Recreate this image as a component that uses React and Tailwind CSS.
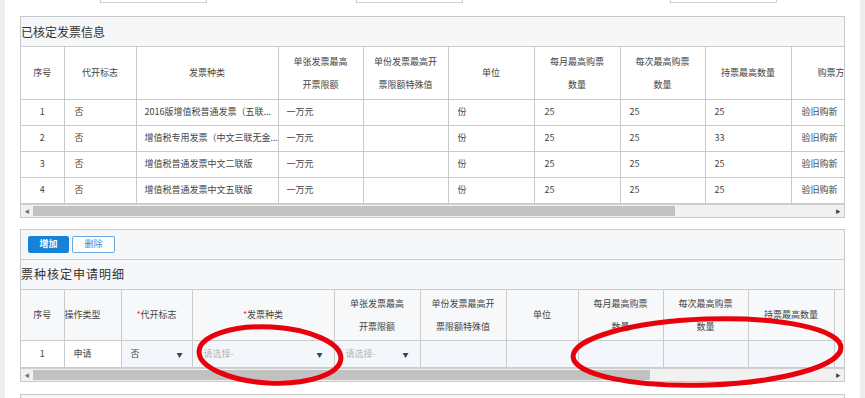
import React from "react";

const font = { fontFamily: '"Noto Sans CJK SC", "Noto Sans", sans-serif' };

const approved = [
  { no: 1, kind: "2016版增值税普通发票（五联...", qty: "25" },
  { no: 2, kind: "增值税专用发票（中文三联无金...", qty: "33" },
  { no: 3, kind: "增值税普通发票中文二联版", qty: "25" },
  { no: 4, kind: "增值税普通发票中文五联版", qty: "25" },
];

function Caret() {
  return <span className="text-[6px] text-gray-700">▼</span>;
}

function FakeScroll({ thumb }) {
  return (
    <div className="flex h-[13px] items-center border-t border-[#d0d0d0] bg-[#f1f1f1]">
      <div className="flex w-[12px] justify-center text-[5px] text-gray-500">◀</div>
      <div className={`h-[10px] bg-[#c1c1c1] ${thumb}`}></div>
      <div className="flex-1"></div>
      <div className="flex w-[12px] justify-center text-[5px] text-gray-700">▶</div>
    </div>
  );
}

function Head({ children, className = "" }) {
  return (
    <th className={`border-r border-b border-[#cbcbcb] px-1 text-center align-middle text-[9px] font-normal leading-[23px] text-[#444] ${className}`}>
      {children}
    </th>
  );
}

function Cell({ children, className = "" }) {
  return (
    <td className={`overflow-hidden whitespace-nowrap border-r border-b border-[#cbcbcb] text-[9px] text-[#444] ${className}`}>
      {children}
    </td>
  );
}

function Req({ children }) {
  return (
    <>
      <span className="text-red-500">*</span>
      {children}
    </>
  );
}

export default function App() {
  return (
    <div className="relative flex h-[398px] w-[865px] overflow-hidden bg-white" style={font}>
      <div className="w-[5px] shrink-0 bg-[#eeeeee]"></div>
      <div className="min-w-0 flex-1 px-[15px]">
        <div className="relative h-[3px]">
          <div className="absolute left-[80px] top-0 h-[3px] w-[107px] border-x border-b border-[#cfcfcf]"></div>
          <div className="absolute left-[336px] top-0 h-[3px] w-[107px] border-x border-b border-[#cfcfcf]"></div>
          <div className="absolute left-[650px] top-0 h-[3px] w-[107px] border-x border-b border-[#cfcfcf]"></div>
        </div>

        <div className="mt-[13px] border border-[#c8c8c8]">
          <div className="flex h-[30px] items-center border-b border-[#cbcbcb] bg-[#f6f7f9] text-[12px] text-[#333]">
            已核定发票信息
          </div>
          <div className="overflow-hidden">
            <table className="w-[880px] table-fixed border-collapse">
              <colgroup>
                <col className="w-[43px]" />
                <col className="w-[72px]" />
                <col className="w-[142px]" />
                <col className="w-[85px]" />
                <col className="w-[85px]" />
                <col className="w-[86px]" />
                <col className="w-[86px]" />
                <col className="w-[85px]" />
                <col className="w-[86px]" />
                <col className="w-[110px]" />
              </colgroup>
              <thead>
                <tr className="h-[52px] bg-white">
                  <Head>序号</Head>
                  <Head>代开标志</Head>
                  <Head>发票种类</Head>
                  <Head>单张发票最高<br />开票限额</Head>
                  <Head>单份发票最高开<br />票限额特殊值</Head>
                  <Head>单位</Head>
                  <Head>每月最高购票<br />数量</Head>
                  <Head>每次最高购票<br />数量</Head>
                  <Head>持票最高数量</Head>
                  <Head className="text-left pl-[26px]">购票方式</Head>
                </tr>
              </thead>
              <tbody>
                {approved.map((r) => (
                  <tr key={r.no} className="h-[26px]">
                    <Cell className="text-center">{r.no}</Cell>
                    <Cell className="pl-[10px]">否</Cell>
                    <Cell className="pl-[8px]">{r.kind}</Cell>
                    <Cell className="pl-[8px]">一万元</Cell>
                    <Cell></Cell>
                    <Cell className="pl-[9px]">份</Cell>
                    <Cell className="pl-[10px]">25</Cell>
                    <Cell className="pl-[9px]">25</Cell>
                    <Cell className="pl-[9px]">{r.qty}</Cell>
                    <Cell className="pl-[10px]">验旧购新</Cell>
                  </tr>
                ))}
              </tbody>
            </table>
          </div>
          <FakeScroll thumb="w-[642px]" />
        </div>

        <div className="mt-[11px] border border-[#c8c8c8]">
          <div className="flex h-[30px] items-center gap-[3px] border-b border-[#cbcbcb] bg-[#f6f7f9] pl-[7px]">
            <button className="h-[17px] w-[41px] rounded-[2px] bg-[#1683d8] text-[9px] font-bold text-white">增加</button>
            <button className="h-[17px] w-[43px] rounded-[2px] border border-[#6aa9dd] bg-white text-[9px] text-[#3a8ad0]">删除</button>
          </div>
          <div className="flex h-[30px] items-center border-b border-[#cbcbcb] bg-[#f6f7f9] text-[12px] tracking-[1px] text-[#333]">
            票种核定申请明细
          </div>
          <div className="overflow-hidden">
            <table className="w-[920px] table-fixed border-collapse">
              <colgroup>
                <col className="w-[43px]" />
                <col className="w-[57px]" />
                <col className="w-[71px]" />
                <col className="w-[142px]" />
                <col className="w-[86px]" />
                <col className="w-[86px]" />
                <col className="w-[72px]" />
                <col className="w-[85px]" />
                <col className="w-[85px]" />
                <col className="w-[86px]" />
                <col className="w-[107px]" />
              </colgroup>
              <thead>
                <tr className="h-[51px] bg-[#f7f8fa]">
                  <Head>序号</Head>
                  <Head className="text-left !px-0">操作类型</Head>
                  <Head><Req>代开标志</Req></Head>
                  <Head><Req>发票种类</Req></Head>
                  <Head>单张发票最高<br />开票限额</Head>
                  <Head>单份发票最高开<br />票限额特殊值</Head>
                  <Head>单位</Head>
                  <Head>每月最高购票<br />数量</Head>
                  <Head>每次最高购票<br />数量</Head>
                  <Head>持票最高数量</Head>
                  <Head></Head>
                </tr>
              </thead>
              <tbody>
                <tr className="h-[27px]">
                  <Cell className="text-center">1</Cell>
                  <Cell className="pl-[9px]">申请</Cell>
                  <Cell className="bg-[#f3f6fb] px-[9px]">
                    <div className="flex items-center justify-between">
                      <span>否</span>
                      <Caret />
                    </div>
                  </Cell>
                  <Cell className="bg-[#f3f6fb] px-[11px]">
                    <div className="flex items-center justify-between">
                      <span className="text-[#b5b5b5]">请选择-</span>
                      <Caret />
                    </div>
                  </Cell>
                  <Cell className="bg-[#f3f6fb] px-[11px]">
                    <div className="flex items-center justify-between">
                      <span className="text-[#b5b5b5]">请选择-</span>
                      <Caret />
                    </div>
                  </Cell>
                  <Cell className="bg-[#f3f6fb]"></Cell>
                  <Cell className="bg-[#f3f6fb]"></Cell>
                  <Cell className="bg-[#f3f6fb]"></Cell>
                  <Cell className="bg-[#f3f6fb]"></Cell>
                  <Cell className="bg-[#f3f6fb]"></Cell>
                  <Cell className="bg-[#f3f6fb]"></Cell>
                </tr>
              </tbody>
            </table>
          </div>
          <FakeScroll thumb="w-[617px]" />
        </div>

        <div className="mt-[12px] h-[20px] border border-[#c8c8c8] bg-[#f6f7f9]"></div>
      </div>
      <div className="w-[5px] shrink-0 bg-[#eeeeee]"></div>

      <svg className="pointer-events-none absolute left-0 top-0" width="865" height="398">
        <ellipse cx="270" cy="355" rx="71" ry="28" fill="none" stroke="#e8000c" strokeWidth="5" transform="rotate(3 270 355)" />
        <ellipse cx="707" cy="352" rx="134" ry="33" fill="none" stroke="#e8000c" strokeWidth="5" transform="rotate(-2 707 352)" />
      </svg>
    </div>
  );
}
